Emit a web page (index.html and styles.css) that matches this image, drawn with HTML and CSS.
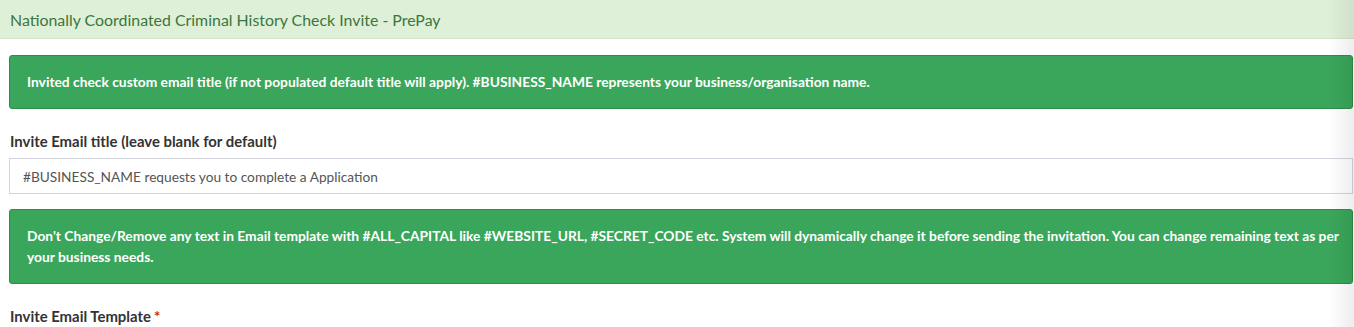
FILE: index.html
```html
<!DOCTYPE html>
<html>
  <head>
    <title>Check Invite - PrePay</title>
    <meta charset="utf-8" />
    <meta name="viewport" content="width=device-width, initial-scale=1" />
    <link rel="stylesheet" href="styles.css">
  </head>
  <body>
    <div class="panel-heading">Nationally Coordinated Criminal History Check Invite - PrePay</div>

    <div class="panel-body">
      <div class="alert">
        Invited check custom email title (if not populated default title will apply). #BUSINESS_NAME represents your business/organisation name.
      </div>

      <div class="form-group">
        <label for="invite-title" class="label">Invite Email title (leave blank for default)</label>
        <input type="text" id="invite-title" class="input" value="#BUSINESS_NAME requests you to complete a Application" />
      </div>

      <div class="alert">
        Don't Change/Remove any text in Email template with #ALL_CAPITAL like #WEBSITE_URL, #SECRET_CODE etc. System will dynamically change it before sending the invitation. You can change remaining text as per your business needs.
      </div>

      <div class="form-group">
        <label class="label">Invite Email Template<span class="required">*</span></label>
      </div>
    </div>

    <div class="edge-shade"></div>
  </body>
</html>
```

FILE: styles.css
```css
:root {
  --green: #3aa65b;
  --green-dark: #2f8c4b;
}

* {
  box-sizing: border-box;
}

body {
  margin: 0;
  font-family: "Lato", "Liberation Sans", sans-serif;
  font-size: 14px;
  color: #333;
  background: #fff;
  overflow: hidden;
}

.panel-heading {
  height: 39px;
  padding: 0 10px;
  display: flex;
  align-items: center;
  background: #dff0d8;
  border-bottom: 1px solid #d3e6c6;
  color: #3c763d;
  font-size: 15.9px;
}

.panel-body {
  padding: 16px 1px 0 9px;
}

.alert {
  background: var(--green);
  border: 1px solid var(--green-dark);
  border-radius: 3px;
  color: #fff;
  font-size: 13.8px;
  font-weight: 700;
  line-height: 21px;
  padding: 15px 6px 16px 17px;
  margin-bottom: 22px;
}

.form-group {
  margin-bottom: 15px;
}

.label {
  display: block;
  font-size: 14.9px;
  font-weight: 700;
  line-height: 20px;
  padding-left: 1px;
  margin-bottom: 7px;
}

.required {
  color: #d9241c;
  margin-left: 3px;
}

.input {
  display: block;
  width: 100%;
  height: 36px;
  padding: 0 13px;
  border: 1px solid #d2d3dc;
  border-radius: 0;
  font-family: inherit;
  font-size: 13.7px;
  color: #555;
}

.edge-shade {
  position: absolute;
  top: 0;
  right: 0;
  bottom: 0;
  width: 26px;
  background: linear-gradient(to right, rgba(0, 0, 0, 0), rgba(0, 0, 0, 0.07));
  pointer-events: none;
}
```
